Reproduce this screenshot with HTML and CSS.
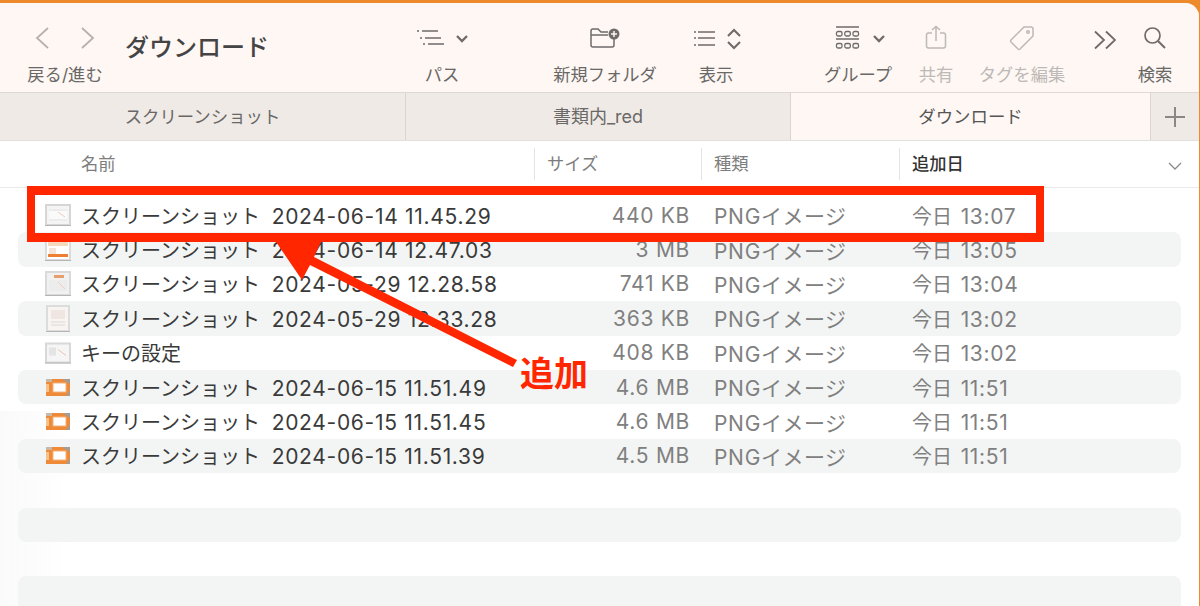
FILE: index.html
```html
<!DOCTYPE html>
<html lang="ja">
<head>
    <meta charset="UTF-8">
    <title>ダウンロード</title>
    <link rel="stylesheet" href="styles.css">
</head>
<body>

    <!-- file previews, used by the rows below -->
    <svg class="defs">
        <symbol id="t-land" viewBox="0 0 26 22">
            <rect x="1" y="1" width="24" height="20" fill="#f4f4f4" stroke="#d6d6d6" stroke-width="2"/>
            <rect x="4" y="5" width="18" height="12" fill="#ececec"/>
            <rect x="4" y="7" width="18" height="8" fill="#fafafa"/>
            <path d="M13 8 L20 13" stroke="#f0c8b8"/>
            <path d="M0 21.500h26" stroke="#b5b5b5"/>
        </symbol>
        <symbol id="t-mix" viewBox="0 0 26 22">
            <rect x="1" y="1" width="24" height="20" fill="#fff" stroke="#dcdcdc" stroke-width="2"/>
            <rect x="3" y="3" width="20" height="4" fill="#f4d9bf"/>
            <rect x="3" y="8" width="20" height="9" fill="#fff"/>
            <rect x="4" y="9" width="7" height="6" fill="#f5e4d6"/>
            <rect x="3" y="15" width="20" height="3" fill="#ee8034"/>
            <path d="M0 21.500h26" stroke="#b5b5b5"/>
        </symbol>
        <symbol id="t-shot" viewBox="0 0 26 25">
            <rect x="1" y="1" width="24" height="23" fill="#f1f1f1" stroke="#dadada" stroke-width="2"/>
            <rect x="9" y="4" width="10" height="3" fill="#e6a070"/>
            <rect x="4" y="9" width="18" height="11" fill="#ececec"/>
            <path d="M13 11 L20 18" stroke="#f0cfc0"/>
            <path d="M0 24.500h26" stroke="#b5b5b5"/>
        </symbol>
        <symbol id="t-page" viewBox="0 0 26 27">
            <rect x="2" y="1" width="22" height="25" fill="#f7f4f2" stroke="#dcdcdc" stroke-width="2"/>
            <rect x="6" y="5" width="14" height="9" fill="#efe6e2"/>
            <path d="M6 17h14M6 20h14" stroke="#dcd8d6"/>
            <path d="M1 26.500h24" stroke="#b5b5b5"/>
        </symbol>
        <symbol id="t-key" viewBox="0 0 26 21">
            <rect x="1" y="1" width="24" height="19" fill="#f5f5f5" stroke="#d8d8d8" stroke-width="2"/>
            <rect x="4" y="5" width="7" height="8" fill="#e4e4e4"/>
            <path d="M13 7 L21 13" stroke="#eec4b6"/>
            <path d="M0 20.500h26" stroke="#b5b5b5"/>
        </symbol>
        <symbol id="t-orange" viewBox="0 0 24 17">
            <rect width="24" height="17" fill="#ee8a38"/>
            <path d="M16 0h8v5z M20 17h4v-6z" fill="#a39d96"/>
            <path d="M0 0h6v3h-6z" fill="#c8b8a8"/>
            <rect x="0" y="5" width="3" height="8" fill="#f6c28c"/>
            <rect x="7" y="4" width="13" height="9" fill="#fff" stroke="#f3b27a"/>
        </symbol>
    </svg>

    <div class="window">
        <!-- toolbar -->
        <div class="toolbar">
            <div class="tool nav">
                <div class="tool-icon">
                    <svg width="80" height="26" viewBox="0 0 80 26" fill="none" stroke="#b5b1ae" stroke-width="1.800"><path d="M23 3 L12 13 L23 23"/><path d="M57 3 L68 13 L57 23"/></svg>
                </div>
                <span>戻る/進む</span>
            </div>
            <div class="title">ダウンロード</div>
            <div class="tool path">
                <div class="tool-icon">
                    <svg width="54" height="26" viewBox="0 0 54 26" fill="none" stroke="#6e6b69" stroke-width="1.700"><path d="M2 6h2M7 6h16M5 13h2M10 13h16M8 19h2M13 19h16"/><path d="M42 11 L47 16 L52 11" stroke-width="2.300"/></svg>
                </div>
                <span>パス</span>
            </div>
            <div class="tool newfolder">
                <div class="tool-icon">
                    <svg width="30" height="20" viewBox="0 0 30 20" fill="none" stroke="#6e6b69" stroke-width="1.500"><path d="M1 7 V17 a2 2 0 0 0 2 2 H22 a2 2 0 0 0 2 -2 V11"/><path d="M1 7 V3 a2 2 0 0 1 2 -2 H8 l3 3 H18"/><path d="M1 7 H18"/><circle cx="24" cy="6" r="5.500" fill="#6e6b69" stroke="none"/><path d="M24 3v6M21 6h6" stroke="#fef7f4" stroke-width="1.500"/></svg>
                </div>
                <span>新規フォルダ</span>
            </div>
            <div class="tool view">
                <div class="tool-icon">
                    <svg width="50" height="26" viewBox="0 0 50 26" fill="none" stroke="#6e6b69" stroke-width="1.700"><path d="M3 7h2M7 7h17M3 13h2M7 13h17M3 20h2M7 20h17"/><path d="M37 11 L43 5 L49 11M37 17 L43 23 L49 17" stroke-width="2.100"/></svg>
                </div>
                <span>表示</span>
            </div>
            <div class="tool group">
                <div class="tool-icon">
                    <svg width="68" height="26" viewBox="0 0 68 26" fill="none" stroke="#6e6b69" stroke-width="1.300"><path d="M12 2h23M12 14h23" stroke-width="1.500"/><rect x="12.500" y="6.500" width="5.500" height="4.500" rx="1.500"/><rect x="20.800" y="6.500" width="5.500" height="4.500" rx="1.500"/><rect x="29" y="6.500" width="5.500" height="4.500" rx="1.500"/><rect x="12.500" y="18.500" width="5.500" height="4.500" rx="1.500"/><rect x="20.800" y="18.500" width="5.500" height="4.500" rx="1.500"/><rect x="29" y="18.500" width="5.500" height="4.500" rx="1.500"/><path d="M50 11 L55 16 L60 11" stroke-width="2.300"/></svg>
                </div>
                <span>グループ</span>
            </div>
            <div class="tool share off">
                <div class="tool-icon">
                    <svg class="lift" width="22" height="24" viewBox="0 0 22 24" fill="none" stroke="#bdb9b6" stroke-width="1.500"><path d="M7 8 H3.500 a2 2 0 0 0 -2 2 V21 a2 2 0 0 0 2 2 H18.500 a2 2 0 0 0 2 -2 V10 a2 2 0 0 0 -2 -2 H15"/><path d="M11 16 V1.500 M7 5 L11 1.500 L15 5"/></svg>
                </div>
                <span>共有</span>
            </div>
            <div class="tool tag off">
                <div class="tool-icon">
                    <svg width="26" height="26" viewBox="0 0 26 26" fill="none" stroke="#bdb9b6" stroke-width="1.500"><path d="M15 2 H22 a2 2 0 0 1 2 2 V11 L11 24 a1.500 1.500 0 0 1 -2 0 L2 17 a1.500 1.500 0 0 1 0 -2 Z"/><circle cx="19" cy="7" r="1.300"/></svg>
                </div>
                <span>タグを編集</span>
            </div>
            <div class="tool more">
                <div class="tool-icon">
                    <svg class="drop" width="22" height="20" viewBox="0 0 22 20" fill="none" stroke="#6e6b69" stroke-width="1.800"><path d="M1 1.500 L10 10 L1 18.500M12 1.500 L21 10 L12 18.500"/></svg>
                </div>
                <span>&nbsp;</span>
            </div>
            <div class="tool search">
                <div class="tool-icon">
                    <svg width="24" height="24" viewBox="0 0 24 24" fill="none" stroke="#6e6b69" stroke-width="1.700"><circle cx="9.500" cy="9.500" r="7.500"/><path d="M15 15 L22 22" stroke-width="2"/></svg>
                </div>
                <span>検索</span>
            </div>
        </div>

        <!-- tabs -->
        <div class="tabs">
            <div class="tab tab-first">スクリーンショット</div>
            <div class="tab tab-second">書類内_red</div>
            <div class="tab tab-active">ダウンロード</div>
            <div class="tab tab-add">
                <svg width="20" height="20" viewBox="0 0 20 20" stroke="#8a8785" stroke-width="2"><path d="M10 0v20M0 10h20"/></svg>
            </div>
        </div>

        <!-- list -->
        <div class="list">
            <div class="list-head">
                <div class="col-name">名前</div>
                <div class="col-size">サイズ</div>
                <div class="col-kind">種類</div>
                <div class="col-date">追加日</div>
                <svg class="sort" width="16" height="10" viewBox="0 0 16 10" fill="none" stroke="#8a8a8a" stroke-width="1.300"><path d="M2 2 L8 8 L14 2"/></svg>
            </div>
            <div class="rows">
                <div class="row">
                    <svg class="thumb thumb-land"><use href="#t-land"/></svg>
                    <div class="col-name">スクリーンショット <span class="lat">2024-06-14 11.45.29</span></div>
                    <div class="col-size lat">440 KB</div>
                    <div class="col-kind"><span class="lat">PNG</span>イメージ</div>
                    <div class="col-date">今日 <span class="lat">13:07</span></div>
                </div>
                <div class="row">
                    <svg class="thumb thumb-land"><use href="#t-mix"/></svg>
                    <div class="col-name">スクリーンショット <span class="lat">2024-06-14 12.47.03</span></div>
                    <div class="col-size lat">3 MB</div>
                    <div class="col-kind"><span class="lat">PNG</span>イメージ</div>
                    <div class="col-date">今日 <span class="lat">13:05</span></div>
                </div>
                <div class="row">
                    <svg class="thumb thumb-shot"><use href="#t-shot"/></svg>
                    <div class="col-name">スクリーンショット <span class="lat">2024-05-29 12.28.58</span></div>
                    <div class="col-size lat">741 KB</div>
                    <div class="col-kind"><span class="lat">PNG</span>イメージ</div>
                    <div class="col-date">今日 <span class="lat">13:04</span></div>
                </div>
                <div class="row">
                    <svg class="thumb thumb-page"><use href="#t-page"/></svg>
                    <div class="col-name">スクリーンショット <span class="lat">2024-05-29 12.33.28</span></div>
                    <div class="col-size lat">363 KB</div>
                    <div class="col-kind"><span class="lat">PNG</span>イメージ</div>
                    <div class="col-date">今日 <span class="lat">13:02</span></div>
                </div>
                <div class="row">
                    <svg class="thumb thumb-land"><use href="#t-key"/></svg>
                    <div class="col-name">キーの設定</div>
                    <div class="col-size lat">408 KB</div>
                    <div class="col-kind"><span class="lat">PNG</span>イメージ</div>
                    <div class="col-date">今日 <span class="lat">13:02</span></div>
                </div>
                <div class="row">
                    <svg class="thumb thumb-orange"><use href="#t-orange"/></svg>
                    <div class="col-name">スクリーンショット <span class="lat">2024-06-15 11.51.49</span></div>
                    <div class="col-size lat">4.6 MB</div>
                    <div class="col-kind"><span class="lat">PNG</span>イメージ</div>
                    <div class="col-date">今日 <span class="lat">11:51</span></div>
                </div>
                <div class="row">
                    <svg class="thumb thumb-orange"><use href="#t-orange"/></svg>
                    <div class="col-name">スクリーンショット <span class="lat">2024-06-15 11.51.45</span></div>
                    <div class="col-size lat">4.6 MB</div>
                    <div class="col-kind"><span class="lat">PNG</span>イメージ</div>
                    <div class="col-date">今日 <span class="lat">11:51</span></div>
                </div>
                <div class="row">
                    <svg class="thumb thumb-orange"><use href="#t-orange"/></svg>
                    <div class="col-name">スクリーンショット <span class="lat">2024-06-15 11.51.39</span></div>
                    <div class="col-size lat">4.5 MB</div>
                    <div class="col-kind"><span class="lat">PNG</span>イメージ</div>
                    <div class="col-date">今日 <span class="lat">11:51</span></div>
                </div>
                <div class="row"></div>
                <div class="row"></div>
                <div class="row"></div>
                <div class="row"></div>
            </div>
        </div>
    </div>

    <!-- annotation drawn on top of the screenshot -->
    <svg class="mark-arrow" width="290" height="150" viewBox="0 0 290 150">
        <path d="M32 6 L84 6 L74 27 L277 130 L273 137 L70 35 L62 50 Z" fill="#ff2600"/>
    </svg>
    <div class="mark-box"></div>
    <div class="mark-label">追加</div>

</body>
</html>
```

FILE: styles.css
```css
* {
    box-sizing: border-box;
}
html, body {
    margin: 0;
    height: 606px;
    overflow: hidden;
}
body {
    position: relative;
    background-color: #ec8a2c;
    font-family: Inter, "Noto Sans CJK JP", sans-serif;
    color: #333;
    padding-top: 3px;
}
.defs {
    display: none;
}
.window {
    height: 603px;
    margin-right: 1px;
    border-top-right-radius: 14px;
    overflow: hidden;
    background-color: #fff;
}

/* toolbar */
.toolbar {
    display: flex;
    height: 89px;
    padding-top: 21px;
    background-color: #fef7f4;
}
.tool {
    display: flex;
    flex-direction: column;
    align-items: center;
    flex: none;
    font-size: 17.300px;
    line-height: 22px;
    color: #6a6866;
    white-space: nowrap;
}
.tool-icon {
    display: flex;
    align-items: center;
    justify-content: center;
    height: 28px;
    margin-bottom: 12px;
}
.off {
    color: #bdb9b6;
}
.lift {
    margin-top: -3px;
}
.drop {
    margin-top: 4px;
}
.nav {
    width: 80px;
    margin-left: 25px;
}
.title {
    flex: none;
    width: 290px;
    margin-left: 20px;
    padding-top: 7px;
    font-size: 24px;
    line-height: 34px;
    font-weight: 500;
    color: #444;
}
.path { width: 54px; }
.newfolder { width: 104px; margin-left: 84px; }
.view { width: 50px; margin-left: 34px; }
.group { width: 68px; margin-left: 83px; }
.share { width: 34px; margin-left: 27px; }
.tag { width: 86px; margin-left: 26px; }
.more { width: 24px; margin-left: 28px; }
.search { width: 34px; margin-left: 21px; }

/* tabs */
.tabs {
    display: flex;
    height: 49px;
    border-top: 1px solid #dcd9d6;
    border-bottom: 1px solid #e3e1df;
    font-size: 17.400px;
    line-height: 47px;
    color: #6a6866;
}
.tab {
    flex: none;
    text-align: center;
    background-color: #efeae6;
    border-right: 1px solid #d8d5d2;
}
.tab-first { width: 406px; }
.tab-second { width: 385px; font-size: 18px; }
.tab-active {
    width: 360px;
    background-color: #fef7f4;
    color: #555;
}
.tab-add {
    flex: 1;
    display: flex;
    align-items: center;
    justify-content: center;
    border-right: none;
}

/* list */
.list {
    position: relative;
    background-color: #fff;
}
.list-head {
    position: relative;
    display: grid;
    grid-template-columns: 534px 167px 198px 1fr;
    height: 47px;
    border-bottom: 1px solid #e9e9e9;
    font-size: 17.300px;
    color: #7d7d7d;
}
.list-head > div {
    margin: 7px 0;
    line-height: 32px;
    border-left: 1px solid #e4e4e4;
    padding-left: 12px;
}
.list-head > .col-name {
    border-left: none;
    padding-left: 81px;
}
.list-head > .col-date {
    color: #333;
    font-weight: 500;
}
.sort {
    position: absolute;
    right: 16px;
    top: 20px;
}
.rows {
    padding: 10px 18px 0;
    background: linear-gradient(90deg, #fbfafa, #fff 70px) left bottom / 70px 200px no-repeat;
}
.row {
    display: grid;
    grid-template-columns: 36px 479px 141px 198px 1fr;
    align-items: center;
    height: 34.400px;
    padding-left: 27px;
    font-size: 20px;
    white-space: nowrap;
    color: #3a3a3a;
    border-radius: 8px;
}
.row:nth-child(even) {
    background-color: #f3f5f4;
}
.lat {
    font-size: 21px;
    letter-spacing: 0.700px;
}
.row .col-name .lat {
    margin-left: 6px;
}
.row .col-size {
    text-align: right;
    padding-right: 11px;
    color: #808080;
}
.row .col-kind,
.row .col-date {
    padding-left: 13px;
    color: #808080;
}
.row .col-kind {
    font-size: 21px;
    letter-spacing: 0.500px;
}
.row .col-date .lat {
    margin-left: 3px;
}

/* little file previews */
.thumb {
    display: block;
}
.thumb-land { width: 26px; height: 22px; }
.thumb-shot { width: 26px; height: 25px; }
.thumb-page { width: 26px; height: 27px; }
.thumb-orange { width: 24px; height: 17px; margin-left: 1px; }

/* annotation */
.mark-box {
    position: absolute;
    left: 27px;
    top: 186px;
    width: 1017px;
    height: 56px;
    border: solid #ff2600;
    border-width: 9px 8px;
}
.mark-arrow {
    position: absolute;
    left: 240px;
    top: 230px;
}
.mark-label {
    position: absolute;
    left: 520px;
    top: 351px;
    font-size: 34px;
    line-height: 46px;
    font-weight: 700;
    color: #ff2600;
}
```
